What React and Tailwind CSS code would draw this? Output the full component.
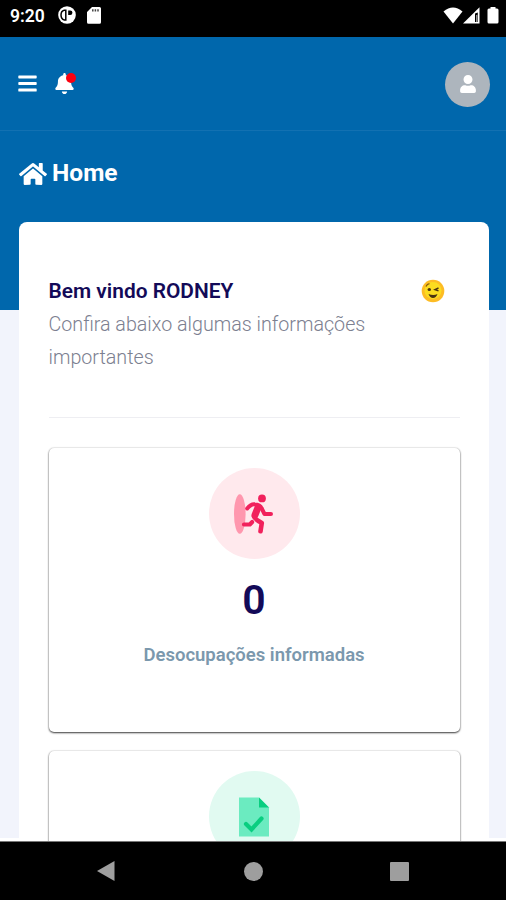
import { FaBars, FaHome, FaBell, FaUser } from 'react-icons/fa';

function StatusBar() {
  return (
    <div className="flex h-[37px] shrink-0 items-start justify-between bg-black pl-[10px] pr-[7px] text-white">
      <div className="flex items-start pt-[6px]">
        <span className="w-[48px] text-[17.5px] font-semibold leading-[21px]">9:20</span>
        <svg width="18" height="18" viewBox="0 0 18 18">
          <circle cx="9" cy="9" r="8.8" fill="#fff" />
          <path d="M7.800 4.200H6.200Q3 5 3 9t3.400 5h1.400z" fill="none" stroke="#000" strokeWidth="1.500" />
          <path d="M10.200 4.500h2a2.200 2.200 0 0 1 0 4.400h-2z" fill="#000" />
        </svg>
        <svg className="ml-[11px] mt-px" width="14" height="17" viewBox="0 0 14 17">
          <path d="M5 0h7.500a1.500 1.500 0 0 1 1.500 1.500v13.800a1.500 1.500 0 0 1-1.500 1.500h-11A1.500 1.500 0 0 1 0 15.300V5z" fill="#fff" />
          <path d="M5.800 2.200v2.300M8.400 2.200v2.300M11 2.200v2.300" stroke="#444" strokeWidth="1.500" />
        </svg>
      </div>
      <div className="flex items-start pt-[7px]">
        <svg width="20" height="17" viewBox="0 0 20 17">
          <path d="M.5 4.500Q10-3.500 19.500 4.500L10 16.500z" fill="#fff" />
        </svg>
        <svg width="17" height="17" viewBox="0 0 17 17">
          <path d="M0 16.500 16.500.300v16.200z" fill="#fff" />
          <path d="M12 6.500v8.500h2.800V5.500z" fill="#000" />
          <path d="M13.800 8v7" stroke="#fff" strokeWidth=".8" />
        </svg>
        <svg className="ml-[7px]" width="12" height="17" viewBox="0 0 12 17">
          <path d="M3.500 0h5v1.500H10a1.500 1.500 0 0 1 1.500 1.500v12a1.500 1.500 0 0 1-1.500 1.500H2A1.500 1.500 0 0 1 .5 15V3A1.500 1.500 0 0 1 2 1.500h1.500z" fill="#fff" />
        </svg>
      </div>
    </div>
  );
}

function TopBar() {
  return (
    <header className="flex h-[94px] items-center border-b border-[#1271b2] pl-[17px] pr-[16px]">
      <FaBars className="text-white" size={21} />
      <div className="relative ml-[16px]">
        <FaBell className="text-white" size={21} />
        <span className="absolute right-[-1px] top-0 size-[10px] rounded-full bg-[#fb0010]" />
      </div>
      <div className="ml-auto mt-px flex size-[45px] items-center justify-center rounded-full bg-[#adb5bd]">
        <FaUser className="text-white" size={18} />
      </div>
    </header>
  );
}

function WinkFace() {
  return (
    <svg width="24" height="24" viewBox="0 0 24 24">
      <circle cx="12" cy="12" r="11.300" fill="#fdbc24" />
      <circle cx="12" cy="11.500" r="8.500" fill="#fbdc20" />
      <path d="M5 7.500q1-2.500 3.500-2.800" fill="none" stroke="#8a5a10" strokeWidth="1.300" />
      <ellipse cx="8.300" cy="10.500" rx="1.700" ry="1.600" fill="#4a3210" />
      <path d="m17.500 9-3.500 1.600 3.500 1.200" fill="none" stroke="#4a3210" strokeWidth="1.400" />
      <path d="M7.500 15q5 2 9 0-1.500 4-4.500 4t-4.500-4z" fill="#4a3210" />
    </svg>
  );
}

function RunIcon() {
  return (
    <svg width="40" height="40" viewBox="0 0 40 40">
      <ellipse cx="5.800" cy="20" rx="5.800" ry="19.700" fill="#ff97ae" />
      <circle cx="28" cy="4.400" r="3.900" fill="#f1215c" />
      <g fill="none" stroke="#f1215c" strokeLinecap="round" strokeLinejoin="round">
        <path d="M13.200 14.500Q17 9.800 20.500 10.200Q26 10.500 27.500 14L30.500 20H37" strokeWidth="4" />
        <path d="M24 13.500 21 21" strokeWidth="7" />
        <path d="M20 22.500Q20.500 25 27.800 29L26.500 37.300" strokeWidth="4.600" />
        <path d="M10 30.500h5.800l2.400-2.500" strokeWidth="4.200" />
      </g>
    </svg>
  );
}

function DocumentIcon() {
  return (
    <svg width="40" height="40" viewBox="0 0 40 40">
      <path d="M5 .500h20l10 10v29H5z" fill="#6bebc0" />
      <path d="M25 .500v10h10z" fill="#09ce80" />
      <path d="m12 27 5.500 5.500 10-11" fill="none" stroke="#09ce80" strokeWidth="4.200" strokeLinecap="round" />
    </svg>
  );
}

function StatCard({ icon, tint, value, label }) {
  return (
    <div className="flex h-[284px] shrink-0 flex-col items-center rounded-[5px] bg-white pt-[20px] shadow-[0_1px_2px_rgba(0,0,0,0.75),0_0_2px_rgba(0,0,0,0.2)]">
      <div className={`flex size-[91px] shrink-0 items-center justify-center rounded-full ${tint}`}>{icon}</div>
      {value && <div className="mt-[16px] text-[41px] font-semibold leading-[50px] text-[#130a58]">{value}</div>}
      {label && <div className="mt-[16px] text-[18.500px] font-semibold leading-[28px] text-[#7b98ad]">{label}</div>}
    </div>
  );
}

function NavBar() {
  return (
    <nav className="flex h-[59px] shrink-0 items-center border-t border-[#777] bg-black pl-[96px] text-[#9e9e9e]">
      <svg width="20" height="22" viewBox="0 0 20 22">
        <path d="M18.500 1v20L1 11z" fill="currentColor" />
      </svg>
      <span className="ml-[128px] size-[19px] rounded-full bg-[#9e9e9e]" />
      <span className="ml-[127px] size-[19px] rounded-[1px] bg-[#9e9e9e]" />
    </nav>
  );
}

export default function App() {
  return (
    <div className="flex h-[900px] w-[506px] flex-col overflow-hidden font-['Roboto',sans-serif]">
      <StatusBar />
      <div className="min-h-0 flex-1 overflow-hidden bg-[linear-gradient(#0067ac_273px,#f2f4fc_273px,#f2f4fc_801px,#fff_801px)]">
        <TopBar />
        <h1 className="flex h-[91px] items-center pb-[6px] pl-[19px] text-[24.500px] font-bold text-white">
          <FaHome className="mr-[5px]" size={28} />
          Home
        </h1>
        <main className="ml-[19px] mr-[17px] flex flex-col rounded-t-[8px] bg-white px-[29.500px] pt-[53px]">
          <div className="flex justify-between pr-[15px]">
            <div className="w-[340px] leading-[33px]">
              <h2 className="text-[20.900px] font-semibold text-[#130a58]">Bem vindo RODNEY</h2>
              <p className="text-[19.700px] font-light text-[#7c8090]">Confira abaixo algumas informações importantes</p>
            </div>
            <div className="pt-[4px]">
              <WinkFace />
            </div>
          </div>
          <hr className="mb-[30px] mt-[43px] border-[#eeeef2]" />
          <div className="flex flex-col gap-[19px]">
            <StatCard icon={<RunIcon />} tint="bg-[#ffe9ed]" value="0" label="Desocupações informadas" />
            <StatCard icon={<DocumentIcon />} tint="bg-[#e1faf1]" />
          </div>
        </main>
      </div>
      <NavBar />
    </div>
  );
}
